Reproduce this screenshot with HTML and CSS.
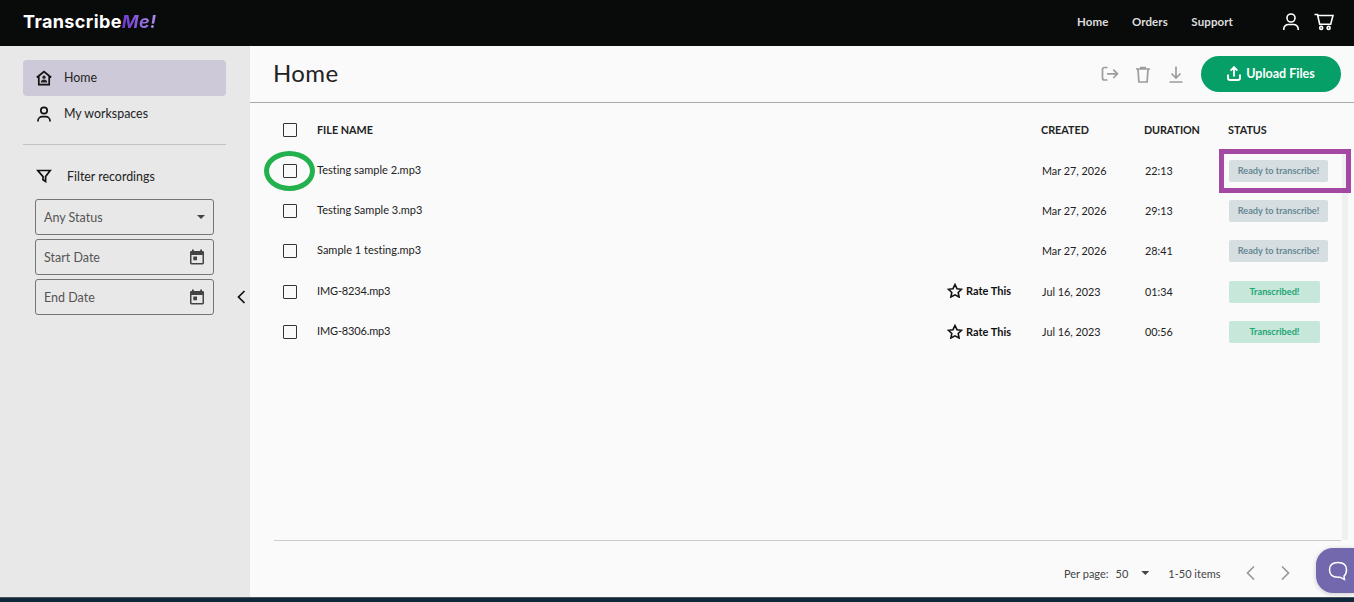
FILE: index.html
```html
<!DOCTYPE html>
<html lang="en">
<head>
  <meta charset="UTF-8">
  <meta name="viewport" content="width=device-width, initial-scale=1.0">
  <title>TranscribeMe!</title>
  <link rel="stylesheet" href="styles.css">
</head>
<body>
  <!-- Top bar -->
  <header class="topbar">
    <div class="logo">Transcribe<span>Me!</span></div>
    <nav class="topnav">
      <a>Home</a>
      <a>Orders</a>
      <a>Support</a>
    </nav>
    <svg class="user-icon" width="18" height="18" viewBox="0 0 18 18"><circle cx="9" cy="5" r="4"/><path d="M1.8 17v-1.2c0-2.6 2.4-4.3 4.6-4.3h5.2c2.2 0 4.6 1.7 4.6 4.3V17"/></svg>
    <svg class="cart-icon" width="20" height="18" viewBox="0 0 20 18"><path d="M.5 1.5h3l2.2 9.800h11L19 2.500H4"/><circle cx="7.2" cy="14.900" r="1.500"/><circle cx="14.600" cy="14.900" r="1.500"/></svg>
  </header>

  <div class="layout">
    <!-- Sidebar -->
    <aside class="sidebar">
      <a class="side-link active">
        <svg width="16" height="16" viewBox="0 0 16 16"><path d="M.8 7.5 8 1.5l7.2 6M2.8 6.2v8.400h10.400V6.200"/><circle class="solid" cx="8" cy="7.2" r="1.6"/><path class="solid" d="M4.800 12.400c0-2 1.800-2.800 3.200-2.800s3.200.8 3.200 2.800z"/></svg>
        <span class="t-home">Home</span>
      </a>
      <a class="side-link">
        <svg width="16" height="16" viewBox="0 0 16 16"><circle cx="8" cy="4.500" r="3.200"/><path d="M2 15.600v-.8c0-2.500 2.100-4.200 4.200-4.200h3.600c2.100 0 4.200 1.700 4.200 4.200v.8"/></svg>
        <span>My workspaces</span>
      </a>
      <hr>
      <div class="filter-title">
        <svg width="16" height="14" viewBox="0 0 16 14"><path d="M1.800 1.500h12.400L9.600 7.600V12.500L7 10.800V7.600z"/></svg>
        <span>Filter recordings</span>
      </div>
      <div class="filters">
        <div class="field"><span>Any Status</span><i class="caret"></i></div>
        <div class="field">
          <span>Start Date</span>
          <svg class="calendar" width="14" height="16" viewBox="0 0 14 16"><path fill-rule="evenodd" d="M2 .5h1.800V2h6.400V.5H12V2h.6C13.400 2 14 2.600 14 3.400v10.700c0 .8-.6 1.400-1.400 1.400H1.400C.6 15.500 0 14.900 0 14.100V3.400C0 2.600.6 2 1.400 2H2zM1.500 6v8h11V6zM3.300 7.500H7v3.800H3.300z"/></svg>
        </div>
        <div class="field">
          <span>End Date</span>
          <svg class="calendar" width="14" height="16" viewBox="0 0 14 16"><path fill-rule="evenodd" d="M2 .5h1.800V2h6.400V.5H12V2h.6C13.400 2 14 2.600 14 3.400v10.700c0 .8-.6 1.400-1.400 1.400H1.400C.6 15.500 0 14.900 0 14.100V3.400C0 2.600.6 2 1.400 2H2zM1.500 6v8h11V6zM3.300 7.500H7v3.800H3.300z"/></svg>
        </div>
      </div>
      <svg class="collapse" width="9" height="14" viewBox="0 0 9 14"><path d="M7.500 1 1.500 7l6 6"/></svg>
    </aside>

    <!-- Main area -->
    <main class="main">
      <div class="page-head">
        <h1>Home</h1>
        <div class="actions">
          <svg width="18" height="16" viewBox="0 0 18 16"><path d="M6.500 1.500H3.500Q1.500 1.500 1.500 3.500v8.500q0 2 2 2h3M6 7.800h10.500M12.300 3.600l4.200 4.200-4.200 4.200"/></svg>
          <svg class="trash" width="16" height="17" viewBox="0 0 16 17"><path d="M1 3h14M5 1.500h6M3 3.500l.9 12.500h8.200L13 3.500"/></svg>
          <svg class="download" width="14" height="17" viewBox="0 0 14 17"><path d="M7 .5v11M2.500 7.500 7 12l4.500-4.500M.5 16h13"/></svg>
          <button class="upload">
            <svg width="14" height="15" viewBox="0 0 14 15"><path d="M7 10.500V1.500M3.600 4.600 7 1.200l3.400 3.400M1 8.500V12q0 2 2 2h8q2 0 2-2V8.500"/></svg>
            <span>Upload Files</span>
          </button>
        </div>
      </div>

      <div class="list">
        <div class="row head">
          <i class="box"></i><span>FILE NAME</span><span></span><span>CREATED</span><span class="h-duration">DURATION</span><span>STATUS</span>
        </div>
        <div class="row">
          <span class="marked"><i class="box"></i></span><span class="name">Testing sample 2.mp3</span><span></span><span class="date">Mar 27, 2026</span><span class="time">22:13</span><span class="status boxed"><b class="badge ready">Ready to transcribe!</b></span>
        </div>
        <div class="row">
          <i class="box"></i><span class="name">Testing Sample 3.mp3</span><span></span><span class="date">Mar 27, 2026</span><span class="time">29:13</span><span class="status"><b class="badge ready">Ready to transcribe!</b></span>
        </div>
        <div class="row">
          <i class="box"></i><span class="name">Sample 1 testing.mp3</span><span></span><span class="date">Mar 27, 2026</span><span class="time">28:41</span><span class="status"><b class="badge ready">Ready to transcribe!</b></span>
        </div>
        <div class="row">
          <i class="box"></i><span class="name img">IMG-8234.mp3</span>
          <span class="rate"><svg width="16" height="15" viewBox="0 0 16 15"><path d="m8 1.500 2 4.200 4.600.6-3.400 3.200.9 4.500L8 11.800 3.900 14l.9-4.500L1.400 6.300 6 5.700z"/></svg><span>Rate This</span></span>
          <span class="date">Jul 16, 2023</span><span class="time">01:34</span><span class="status"><b class="badge done">Transcribed!</b></span>
        </div>
        <div class="row">
          <i class="box"></i><span class="name img">IMG-8306.mp3</span>
          <span class="rate"><svg width="16" height="15" viewBox="0 0 16 15"><path d="m8 1.500 2 4.200 4.600.6-3.400 3.200.9 4.500L8 11.800 3.900 14l.9-4.500L1.400 6.300 6 5.700z"/></svg><span>Rate This</span></span>
          <span class="date">Jul 16, 2023</span><span class="time">00:56</span><span class="status"><b class="badge done">Transcribed!</b></span>
        </div>
        <div class="scrollbar"></div>
      </div>

      <div class="pager">
        <span>Per page:</span>
        <span class="count">50</span>
        <i class="caret"></i>
        <span class="items">1-50 items</span>
        <svg width="9" height="14" viewBox="0 0 9 14"><path d="M8 .5 1.500 7 8 13.500"/></svg>
        <svg width="9" height="14" viewBox="0 0 9 14"><path d="M1 .5 7.500 7 1 13.500"/></svg>
      </div>
    </main>
  </div>
  <div class="bottom-strip"></div>

  <!-- Chat launcher -->
  <div class="chat">
    <svg width="20" height="20" viewBox="0 0 20 20"><path d="M10 1.500c5.600 0 8.500 2 8.500 7.300 0 3.200-.8 5-2.500 6.200l.4 3.500-4.400-2.300H10c-5.600 0-8.500-2-8.500-7.400S4.400 1.500 10 1.500z"/></svg>
  </div>
</body>
</html>
```
FILE: styles.css
```css
/* General Styles */
*,
*::after {
  box-sizing: border-box;
}

body {
  margin: 0;
  height: 602px;
  overflow: hidden;
  display: flex;
  flex-direction: column;
  font-family: Lato, "Noto Sans", sans-serif;
  font-size: 11px;
  font-variant-ligatures: none;
  color: #222;
  background: #fafafa;
}

svg {
  display: block;
  flex: none;
  fill: none;
  stroke: #111;
  stroke-width: 1.7;
}

span {
  white-space: nowrap;
}

/* Top bar */
.topbar {
  height: 46px;
  flex: none;
  display: flex;
  align-items: center;
  padding: 0 20px 3px 23px;
  background: #090b0a;
}

.logo {
  font: 700 18px/22px Inter, sans-serif;
  letter-spacing: 0.4px;
  color: #fff;
}

.logo span {
  padding-right: 2px;
  font-style: italic;
  background: linear-gradient(90deg, #6c38d0, #b092ec);
  -webkit-background-clip: text;
  background-clip: text;
  color: transparent;
}

.topnav {
  display: flex;
  gap: 23.5px;
  margin-left: auto;
  padding-bottom: 1px;
  font-size: 11.5px;
  font-weight: 700;
  letter-spacing: 0.1px;
  color: #dedede;
}

.topbar svg {
  stroke: #fff;
  stroke-width: 1.6;
}

.user-icon {
  margin-left: 49px;
}

.cart-icon {
  margin-left: 14px;
}

/* Sidebar */
.layout {
  display: flex;
  height: 551px;
  flex: none;
}

.sidebar {
  position: relative;
  width: 250px;
  flex: none;
  padding: 14px 24px 0 23px;
  background: #e8e8e8;
}

.side-link {
  display: flex;
  align-items: center;
  gap: 12px;
  height: 36px;
  padding: 0 14px 2px 13px;
  border-radius: 4px;
  font-size: 12.4px;
}

.side-link svg {
  margin-top: 2px;
}

.side-link .solid {
  fill: #222;
  stroke: none;
}

.active {
  background: #cdc9d8;
}

.sidebar hr {
  margin: 12px 0 0;
  border: 0;
  border-top: 1px solid #c3c3c3;
}

.filter-title {
  display: flex;
  align-items: center;
  gap: 15px;
  height: 54px;
  padding: 8px 0 0 13px;
  font-size: 12.4px;
}

.filters {
  display: flex;
  flex-direction: column;
  gap: 4px;
  padding: 0 12px;
}

.field {
  display: flex;
  align-items: center;
  justify-content: space-between;
  height: 36px;
  padding: 0 9px 0 8px;
  border: 1px solid #747474;
  border-radius: 3px;
  font-size: 12.5px;
  color: #555;
}

.field .calendar {
  fill: #444;
  stroke: none;
}

.caret {
  width: 8px;
  height: 4px;
  background: #444;
  clip-path: polygon(0 0, 100% 0, 50% 100%);
}

.field .caret {
  margin-right: -1px;
}

.collapse {
  position: absolute;
  left: 237px;
  top: 244px;
}

/* Main area */
.main {
  flex: 1;
  display: flex;
  flex-direction: column;
}

.page-head {
  display: flex;
  align-items: center;
  justify-content: space-between;
  height: 57px;
  padding: 0 13px 0 23px;
  border-bottom: 1px solid #aaa;
}

.page-head h1 {
  margin: 0;
  padding-bottom: 2px;
  font-size: 24px;
  font-weight: 400;
  line-height: 30px;
  letter-spacing: 0.4px;
}

.actions {
  display: flex;
  align-items: center;
}

.actions svg {
  stroke: #9c9c9c;
  stroke-width: 1.7;
}

.actions .trash {
  margin-left: 16px;
}

.actions .download {
  margin: 0 18px;
}

.upload {
  display: flex;
  align-items: center;
  justify-content: center;
  gap: 5px;
  width: 140px;
  height: 36px;
  padding: 0 0 1px;
  border: 0;
  border-radius: 18px;
  background: #059f67;
  color: #fff;
  font: 700 12.5px Lato, sans-serif;
}

.actions .upload svg {
  stroke: #fff;
  stroke-width: 1.9;
}

/* File list */
.list {
  position: relative;
  height: 438px;
  margin: 0 13px 0 24px;
  padding-top: 7px;
  border-bottom: 1px solid #ccc;
}

.row {
  display: grid;
  grid-template-columns: 43px 630px 94px 103px 84px 1fr;
  align-items: center;
  height: 40.4px;
}

.head {
  font-size: 10.8px;
  font-weight: 700;
}

.head span {
  padding-bottom: 1px;
}

.head .h-duration {
  letter-spacing: -0.1px;
}

.box {
  display: block;
  width: 14px;
  height: 14px;
  margin-left: 9px;
  border: 1px solid #333;
  border-radius: 1px;
}

.name {
  padding-bottom: 3px;
}

.name.img {
  letter-spacing: -0.15px;
}

.date,
.time {
  padding: 0 0 1px 1px;
  font-size: 10.8px;
}

.rate {
  display: flex;
  align-items: center;
  gap: 3px;
  padding-bottom: 2px;
  font-weight: 700;
  color: #111;
}

.rate svg {
  stroke-width: 1.6;
}

.badge {
  display: block;
  width: 99px;
  height: 22px;
  margin-left: 1px;
  border-radius: 2px;
  font-size: 9.2px;
  line-height: 21px;
  text-align: center;
}

.ready {
  background: #d6dee2;
  color: #668994;
}

.done {
  width: 91px;
  background: #c6e7da;
  color: #21a573;
}

/* Highlights over the first row */
.marked,
.boxed {
  position: relative;
}

.marked::after {
  content: "";
  position: absolute;
  left: -10px;
  top: -13px;
  width: 51px;
  height: 40px;
  border: 5px solid #22b14c;
  border-radius: 50%;
}

.boxed::after {
  content: "";
  position: absolute;
  z-index: 1;
  left: -9px;
  top: -11px;
  width: 132px;
  height: 44px;
  border: 5px solid #a349a4;
}

.scrollbar {
  position: absolute;
  right: -7px;
  top: 47px;
  width: 6px;
  height: 390px;
  background: #f0f0f0;
}

/* Pager */
.pager {
  flex: 1;
  display: flex;
  align-items: center;
  padding: 8px 0 0 814px;
  color: #444;
}

.pager .count {
  margin: 0 13px 0 7px;
}

.pager .items {
  margin: 0 25px 0 19px;
}

.pager svg {
  stroke: #999;
}

.pager svg + svg {
  margin-left: 26px;
}

.bottom-strip {
  height: 5px;
  background: #10273a;
  border-top: 1px solid #45545d;
}

/* Chat launcher */
.chat {
  position: absolute;
  left: 1316px;
  top: 548px;
  display: flex;
  align-items: center;
  width: 38px;
  height: 45px;
  padding-left: 12px;
  border-radius: 17px 0 0 17px;
  background: #7368ad;
  box-shadow: 0 1px 5px rgba(0, 0, 0, 0.2);
}

.chat svg {
  stroke: #fff;
  stroke-width: 1.5;
}
```
